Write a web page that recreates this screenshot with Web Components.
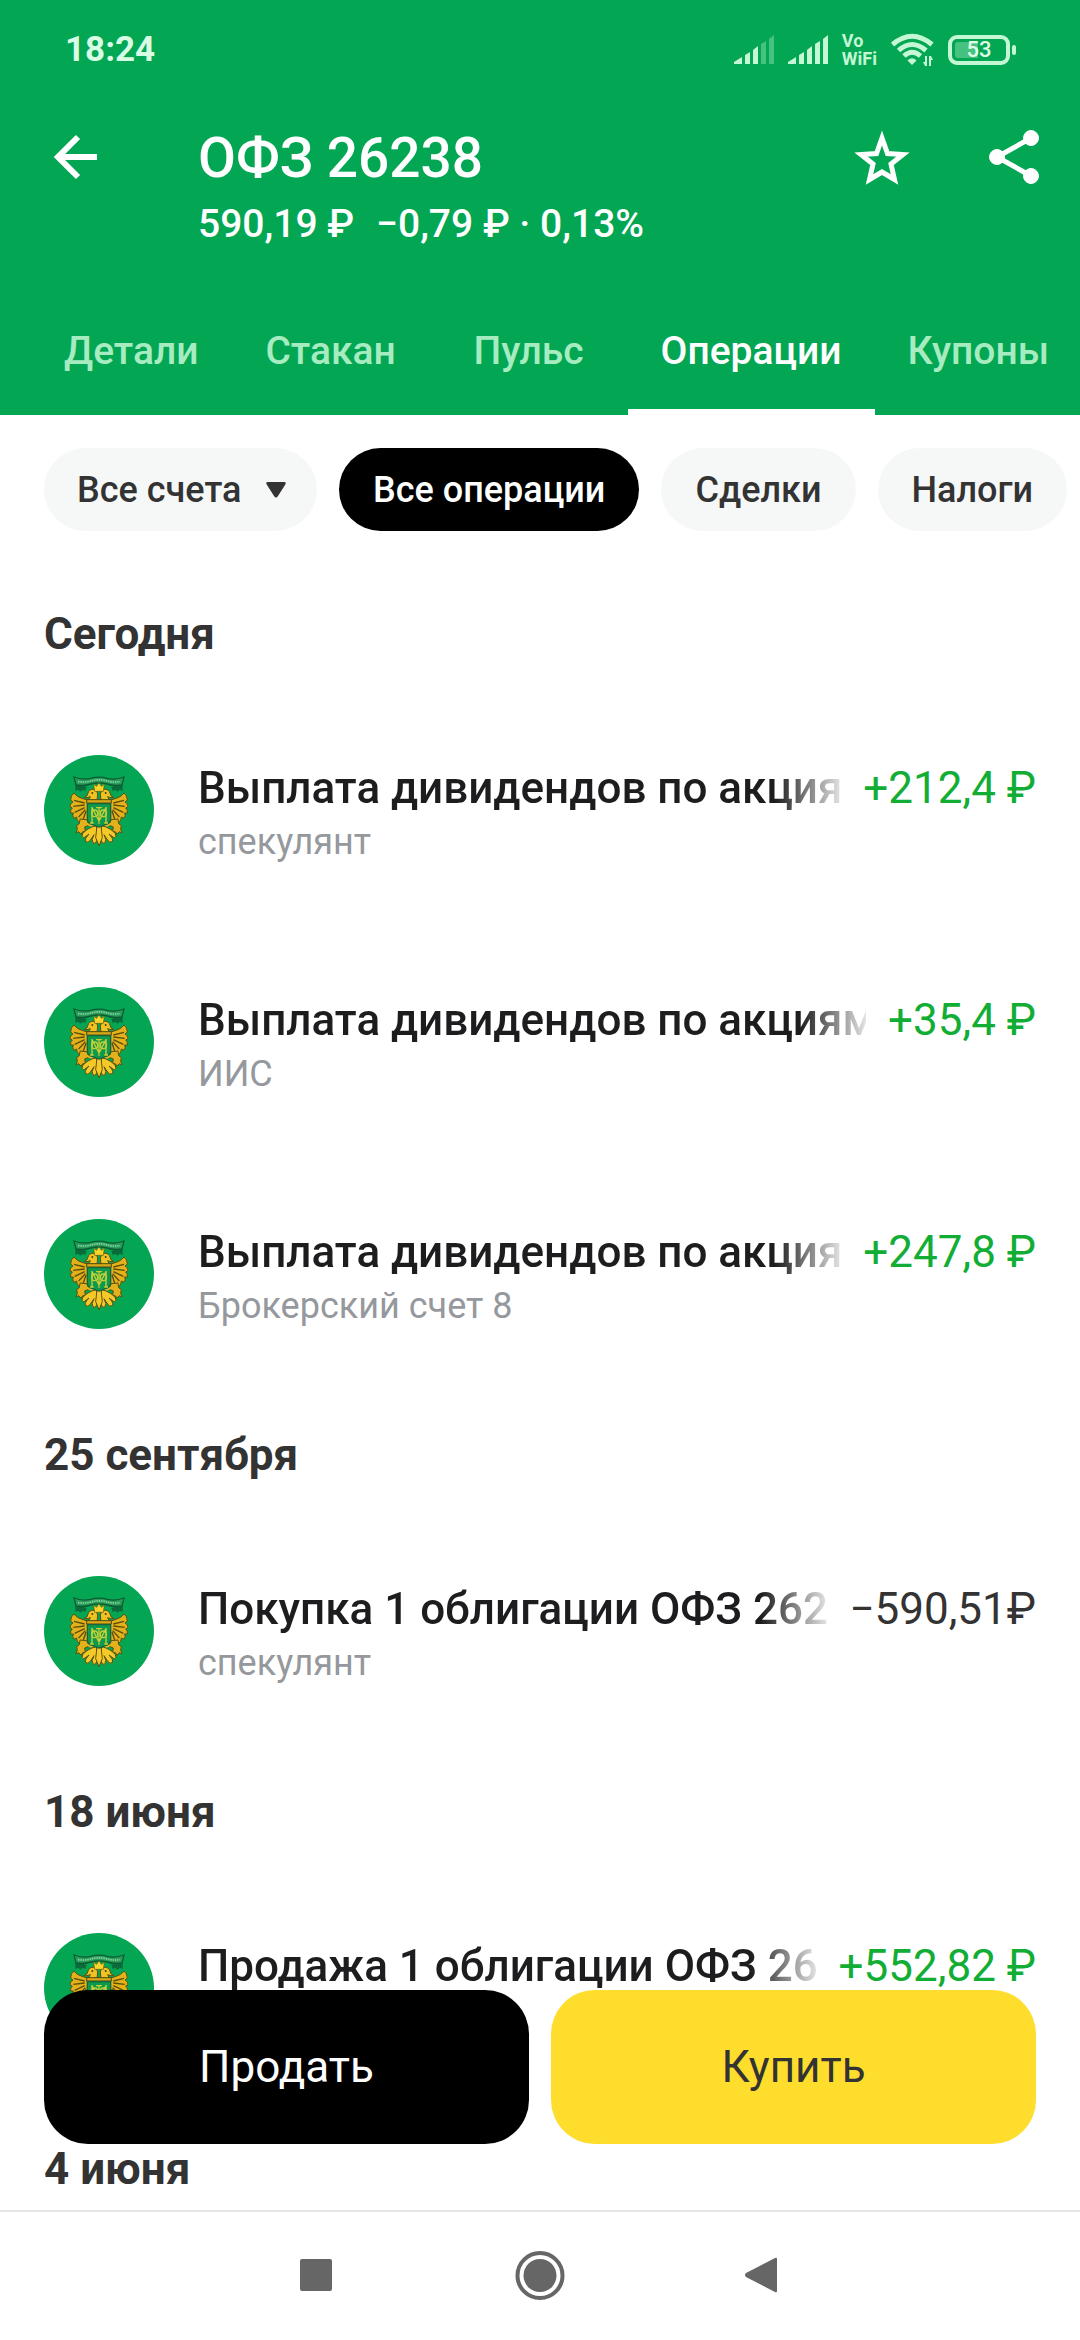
<!DOCTYPE html>
<html lang="ru">
<head>
<meta charset="utf-8">
<meta name="viewport" content="width=device-width, initial-scale=1">
<title>ОФЗ 26238</title>
<style>
    body {
        margin: 0;
        font-family: Roboto, "Noto Sans", sans-serif;
        color: #333;
        background: #fff;
    }
</style>
</head>
<body>
<bond-page></bond-page>

<script>
class StatusBar extends HTMLElement {
    constructor() {
        super();
        this.attachShadow({mode: "open"}).innerHTML = `
        <style>
            :host {
                display: flex;
                align-items: center;
                box-sizing: border-box;
                height: 99px;
                padding: 0 62px 0 65px;
                color: #c4f7d4;
            }
            time {
                flex: 1;
                font-size: 35px;
                font-weight: 700;
                color: #d9fce4;
            }
            svg {
                display: block;
            }
            .icons {
                display: flex;
                align-items: center;
                gap: 14px;
            }
            .vowifi {
                font-size: 18px;
                font-weight: 700;
                line-height: 18px;
            }
            .battery {
                display: grid;
                align-items: center;
            }
            .battery > * {
                grid-area: 1 / 1;
            }
            .battery span {
                width: 62px;
                text-align: center;
                font-size: 22px;
                font-weight: 500;
                color: #e0ffe9;
            }
        </style>
        <time>18:24</time>
        <div class="icons">
            <svg width="40" height="30" fill="currentColor">
                <path d="M0 29v-2l8-5v7zM11 29v-9l5-3v12zM19 29V15l5-4v18z"/>
                <path opacity=".35" d="M27 29V9l5-3v23zM35 29V4l5-4v29z"/>
            </svg>
            <svg width="40" height="30" fill="currentColor">
                <path d="M0 29v-2l8-5v7zM11 29v-9l5-3v12zM19 29V15l5-4v18zM27 29V9l5-3v23zM35 29V4l5-4v29z"/>
            </svg>
            <div class="vowifi">Vo<br>WiFi</div>
            <svg width="43" height="34" viewBox="0 0 43 34" fill="none" stroke="currentColor" stroke-width="5">
                <path d="M1.500 11.500Q21 -5 41 11.500M7.500 17.500Q21 5.500 35 17.500M13 23Q21 15.500 29.500 23"/>
                <path fill="currentColor" stroke="none" d="M16.500 27.500q4.500-4.500 9 0l-4.500 4.500z"/>
                <path fill="currentColor" stroke="none" d="M36 23v10h-2l-2-4h2v-6zM38 33V23h2l2 4h-2v6z"/>
            </svg>
            <div class="battery">
                <svg width="70" height="32" viewBox="0 0 70 32">
                    <rect x="2" y="3" width="58" height="26" rx="7" fill="none" stroke="currentColor" stroke-width="4"/>
                    <path fill="currentColor" opacity=".35" d="M10 8h20v16H10q-3 0-3-3V11q0-3 3-3z"/>
                    <rect x="64" y="11" width="4" height="10" rx="2" fill="currentColor"/>
                </svg>
                <span>53</span>
            </div>
        </div>`;
    }
}
customElements.define("status-bar", StatusBar);

class BondToolbar extends HTMLElement {
    constructor() {
        super();
        this.attachShadow({mode: "open"}).innerHTML = `
        <style>
            :host {
                display: flex;
                align-items: flex-start;
                padding: 27px 34px 36px 46px;
                color: #fff;
            }
            button {
                display: grid;
                place-items: center;
                width: 64px;
                height: 64px;
                padding: 0;
                border: 0;
                background: none;
                color: inherit;
            }
            .text {
                flex: 1;
                margin-left: 88px;
            }
            h1 {
                margin: 0 0 11px;
                font-size: 55px;
                line-height: 64px;
                font-weight: 500;
            }
            p {
                display: flex;
                gap: 22px;
                margin: 0;
                font-size: 39px;
                line-height: 46px;
                font-weight: 500;
            }
            .actions {
                display: flex;
                gap: 68px;
            }
        </style>
        <button aria-label="Назад">
            <svg width="64" height="64" fill="none" stroke="currentColor" stroke-width="6">
                <path d="M51 31H12M32 11L12 31l20 20"/>
            </svg>
        </button>
        <div class="text">
            <h1><slot name="title"></slot></h1>
            <p><slot></slot></p>
        </div>
        <div class="actions">
            <button aria-label="В избранное">
                <svg width="64" height="64" fill="none" stroke="currentColor" stroke-width="5">
                    <path d="M32 12l5.500 15.500 15.500 1L41 38l3.500 15.500L32 46l-12.500 7.500L23 38 11 28.500l15.500-1z"/>
                </svg>
            </button>
            <button aria-label="Поделиться">
                <svg width="64" height="64" fill="currentColor" stroke="currentColor">
                    <path fill="none" stroke-width="5" d="M49 12L15 31l34 19"/>
                    <circle cx="49" cy="12" r="7.500"/>
                    <circle cx="15" cy="31" r="7.500"/>
                    <circle cx="49" cy="50" r="7.500"/>
                </svg>
            </button>
        </div>`;
    }
}
customElements.define("bond-toolbar", BondToolbar);

class TabItem extends HTMLElement {
    constructor() {
        super();
        this.attachShadow({mode: "open"}).innerHTML = `
        <style>
            :host {
                flex: none;
                min-width: 198px;
                display: flex;
            }
            button {
                flex: 1;
                height: 132px;
                padding: 10px 33px 0;
                border: 0;
                border-bottom: 6px solid transparent;
                background: none;
                font: 500 39px/46px Roboto, sans-serif;
                white-space: nowrap;
                color: #a6ecc0;
            }
            :host([active]) button {
                color: #fff;
                border-color: #fff;
            }
        </style>
        <button><slot></slot></button>`;
    }
}
customElements.define("tab-item", TabItem);

class FilterChip extends HTMLElement {
    constructor() {
        super();
        this.attachShadow({mode: "open"});
    }

    connectedCallback() {
        const control = this.hasAttribute("dropdown")
            ? `<select aria-label="Счет"><option>${this.textContent}</option></select>
               <svg width="20" height="16" fill="currentColor"><path d="M2 0h16q3 0 1 3l-7 11q-2 3-4 0L1 3q-2-3 1-3z"/></svg>`
            : `<button><slot></slot></button>`;
        this.shadowRoot.innerHTML = `
        <style>
            :host {
                flex: none;
                display: grid;
                align-items: center;
                color: #333;
            }
            button, select {
                grid-area: 1 / 1;
                height: 83px;
                padding: 0 34px;
                border: 0;
                border-radius: 42px;
                background: #f6f8f8;
                color: inherit;
                font: 500 36px/42px Roboto, sans-serif;
                white-space: nowrap;
                appearance: none;
            }
            select {
                padding: 0 75px 0 33px;
            }
            svg {
                grid-area: 1 / 1;
                justify-self: end;
                margin-right: 31px;
                pointer-events: none;
            }
            :host([active]) button {
                background: #000;
                color: #fff;
            }
        </style>
        ${control}`;
    }
}
customElements.define("filter-chip", FilterChip);

// round badge with the coat of arms
class BondLogo extends HTMLElement {
    constructor() {
        super();
        this.attachShadow({mode: "open"}).innerHTML = `
        <style>
            :host {
                display: block;
                width: 110px;
                height: 110px;
            }
            svg {
                display: block;
            }
        </style>
        <svg width="110" height="110" viewBox="0 0 330 330">
            <defs>
                <g id="half">
                    <!-- leaves under the ribbon -->
                    <path fill="#0b6b3a" d="M94 84l12 6 8-4 6 8 8 2-4 12-8-4-6 6-8-6-8 4z"/>
                    <!-- wing -->
                    <path fill="#e3b21a" stroke="#5f5010" stroke-width="3" d="M90 114q8 12 24 16l24 8-4 38-4 24q-12 4-16-8l-8 10q-8-4-8-16l-8 4q-6-8-2-16l-8 0q-2-10 5-15l-7-4q0-10 9-14l-7-6q0-14 10-21z"/>
                    <path stroke="#5c4d0c" stroke-width="4" fill="none" d="M90 136l32 8M88 154l34-4M92 172l30-14M104 186l20-22M118 192l8-24"/>
                    <!-- head and neck -->
                    <path fill="#f0c325" stroke="#5f5010" stroke-width="3" d="M120 128q12-4 12-14 4-12 16-11 12 2 13 14l-2 20h-26l6-12-10 3z"/>
                    <circle cx="145" cy="114" r="3" fill="#4c410b"/>
                    <!-- leg with claws -->
                    <path fill="#e3b21a" stroke="#5f5010" stroke-width="3" d="M108 192l20 2 8 16-14 6 2 12-10 4-2 6-8-8-8 4 4-12-2-10 8-6z"/>
                    <path fill="none" stroke="#e9bd22" stroke-width="6" d="M130 206q8 8 20 8"/>
                    <!-- tail feathers -->
                    <path fill="#f5ca28" stroke="#5f5010" stroke-width="3" d="M156 212q-28 8-40 24-5 9 3 13l16-12q-14 14-11 22 8 6 14-2l12-18q-10 16-2 26 8 2 10-8l5-20z"/>
                </g>
            </defs>
            <circle cx="165" cy="165" r="165" fill="#05a653"/>
            <use href="#half"/>
            <use href="#half" transform="translate(330 0) scale(-1 1)"/>
            <path fill="#2a9d5a" stroke="#0a5c33" stroke-width="4" d="M90 66q24 10 50 4 25-7 50 0 26 6 50-4l-6 24q-24 4-44-3-25-6-50 0-20 7-44 3z"/>
            <path stroke="#8fd9a6" stroke-width="5" stroke-dasharray="4 3" fill="none" d="M102 80q20 3 38-2 25-7 50 0 18 5 38 2"/>
            <path fill="#fbd42b" stroke="#6b5a10" stroke-width="2" d="M149 88l9 6 7-11 7 11 9-6-3 21h-26z"/>
            <path fill="#f5ca28" stroke="#5f5010" stroke-width="3" d="M159 212h12l4 36-10 24-10-24z"/>
            <path fill="#d6a91b" stroke="#54480c" stroke-width="3" d="M128 134h74v10h-74z"/>
            <path fill="#0d9a4e" stroke="#17653a" stroke-width="4" d="M130 146h70v46q0 12-14 16l-21 8-21-8q-14-4-14-16z"/>
            <g fill="none" stroke="#c9cf35" stroke-width="4">
                <path d="M165 156v50M156 158h18M144 156v48M186 156v48M144 158l21 40 21-40M138 204h11M181 204h11"/>
                <ellipse cx="152" cy="175" rx="9" ry="10"/>
                <ellipse cx="178" cy="175" rx="9" ry="10"/>
            </g>
        </svg>`;
    }
}
customElements.define("bond-logo", BondLogo);

class OperationRow extends HTMLElement {
    constructor() {
        super();
        this.attachShadow({mode: "open"});
    }

    set operation(operation) {
        this._operation = operation;
        this.render();
    }

    render() {
        const {title, account, amount} = this._operation;
        this.shadowRoot.innerHTML = `
        <style>
            :host {
                display: flex;
                align-items: center;
                height: 232px;
                padding: 0 44px;
            }
            .info {
                flex: 1;
                min-width: 0;
                margin-left: 44px;
                height: 110px;
            }
            .line {
                display: flex;
                gap: 22px;
                margin-top: 8px;
                font-size: 44px;
                line-height: 50px;
            }
            .title {
                flex: 1;
                overflow: hidden;
                white-space: nowrap;
                font-weight: 500;
                color: #1d1d1f;
                -webkit-mask-image: linear-gradient(to left, rgba(0, 0, 0, .12), #000 66px);
                mask-image: linear-gradient(to left, rgba(0, 0, 0, .12), #000 66px);
            }
            .amount {
                white-space: nowrap;
            }
            .plus {
                color: #12ad35;
            }
            .account {
                margin-top: 8px;
                font-size: 36px;
                line-height: 42px;
                color: #95989c;
            }
        </style>
        <bond-logo></bond-logo>
        <div class="info">
            <div class="line">
                <span class="title">${title}</span>
                <span class="amount ${amount[0] === "+" ? "plus" : ""}">${amount}</span>
            </div>
            <div class="account">${account}</div>
        </div>`;
    }
}
customElements.define("operation-row", OperationRow);

class OperationGroup extends HTMLElement {
    constructor() {
        super();
        this.attachShadow({mode: "open"});
    }

    set group(group) {
        this.shadowRoot.innerHTML = `
        <style>
            :host {
                display: block;
            }
            h2 {
                margin: 0;
                padding: 5px 44px 0;
                font-size: 44px;
                line-height: 120px;
                font-weight: 700;
            }
        </style>
        <h2>${group.date}</h2>`;
        group.operations.forEach(operation => {
            const row = document.createElement("operation-row");
            row.operation = operation;
            this.shadowRoot.appendChild(row);
        });
    }
}
customElements.define("operation-group", OperationGroup);

class TradeButtons extends HTMLElement {
    constructor() {
        super();
        this.attachShadow({mode: "open"}).innerHTML = `
        <style>
            :host {
                display: flex;
                gap: 22px;
            }
            button {
                flex: 1;
                height: 154px;
                border: 0;
                border-radius: 44px;
                font: 400 44px/50px Roboto, sans-serif;
                background: #ffdd2d;
                color: #333;
            }
            .sell {
                background: #000;
                color: #fff;
            }
        </style>
        <button class="sell">Продать</button>
        <button>Купить</button>`;
    }
}
customElements.define("trade-buttons", TradeButtons);

class SystemNav extends HTMLElement {
    constructor() {
        super();
        this.attachShadow({mode: "open"}).innerHTML = `
        <style>
            :host {
                display: flex;
                justify-content: center;
                align-items: center;
                gap: 174px;
                box-sizing: border-box;
                height: 130px;
                border-top: 2px solid #e6e6e6;
                background: #fff;
                color: #666;
            }
            button {
                padding: 0;
                border: 0;
                background: none;
                color: inherit;
            }
            svg {
                display: block;
            }
        </style>
        <button aria-label="Недавние"><svg width="50" height="50" fill="currentColor"><rect x="9" y="8" width="32" height="32" rx="2"/></svg></button>
        <button aria-label="Домой">
            <svg width="50" height="50" fill="currentColor">
                <circle cx="25" cy="24.500" r="16.500"/>
                <circle cx="25" cy="24.500" r="22.500" fill="none" stroke="currentColor" stroke-width="4"/>
            </svg>
        </button>
        <button aria-label="Назад"><svg width="50" height="50" fill="currentColor"><path d="M36 7q2-1 2 1v32q0 2-2 1L7 26q-2-2 0-4z"/></svg></button>`;
    }
}
customElements.define("system-nav", SystemNav);

const groups = [
    {
        date: "Сегодня",
        operations: [
            {title: "Выплата дивидендов по акциям", account: "спекулянт", amount: "+212,4 ₽"},
            {title: "Выплата дивидендов по акциям", account: "ИИС", amount: "+35,4 ₽"},
            {title: "Выплата дивидендов по акциям", account: "Брокерский счет 8", amount: "+247,8 ₽"}
        ]
    },
    {
        date: "25 сентября",
        operations: [
            {title: "Покупка 1 облигации ОФЗ 262", account: "спекулянт", amount: "−590,51₽"}
        ]
    },
    {
        date: "18 июня",
        operations: [
            {title: "Продажа 1 облигации ОФЗ 26", account: "", amount: "+552,82 ₽"}
        ]
    },
    {date: "4 июня", operations: []}
];

class BondPage extends HTMLElement {
    constructor() {
        super();
        this.attachShadow({mode: "open"}).innerHTML = `
        <style>
            :host {
                display: flex;
                flex-direction: column;
                height: 100vh;
            }
            header {
                background: #03a653;
            }
            .tabs, .chips {
                display: flex;
                overflow: hidden;
            }
            .tabs {
                padding-left: 31px;
            }
            .chips {
                gap: 22px;
                padding: 33px 0 38px 44px;
            }
            main {
                position: relative;
                flex: 1;
                min-height: 0;
                overflow: hidden;
            }
            trade-buttons {
                position: absolute;
                left: 44px;
                right: 44px;
                bottom: 66px;
            }
        </style>
        <header>
            <status-bar></status-bar>
            <bond-toolbar>
                <span slot="title">ОФЗ 26238</span>
                <span>590,19 ₽</span>
                <span>−0,79 ₽ · 0,13%</span>
            </bond-toolbar>
            <nav class="tabs">
                <tab-item>Детали</tab-item>
                <tab-item>Стакан</tab-item>
                <tab-item>Пульс</tab-item>
                <tab-item active>Операции</tab-item>
                <tab-item>Купоны</tab-item>
            </nav>
        </header>
        <main>
            <div class="chips">
                <filter-chip dropdown>Все счета</filter-chip>
                <filter-chip active>Все операции</filter-chip>
                <filter-chip>Сделки</filter-chip>
                <filter-chip>Налоги</filter-chip>
            </div>
            <div class="list"></div>
            <trade-buttons></trade-buttons>
        </main>
        <system-nav></system-nav>`;
        const list = this.shadowRoot.querySelector(".list");
        groups.forEach(group => {
            const el = document.createElement("operation-group");
            el.group = group;
            list.appendChild(el);
        });
    }
}
customElements.define("bond-page", BondPage);
</script>
</body>
</html>
